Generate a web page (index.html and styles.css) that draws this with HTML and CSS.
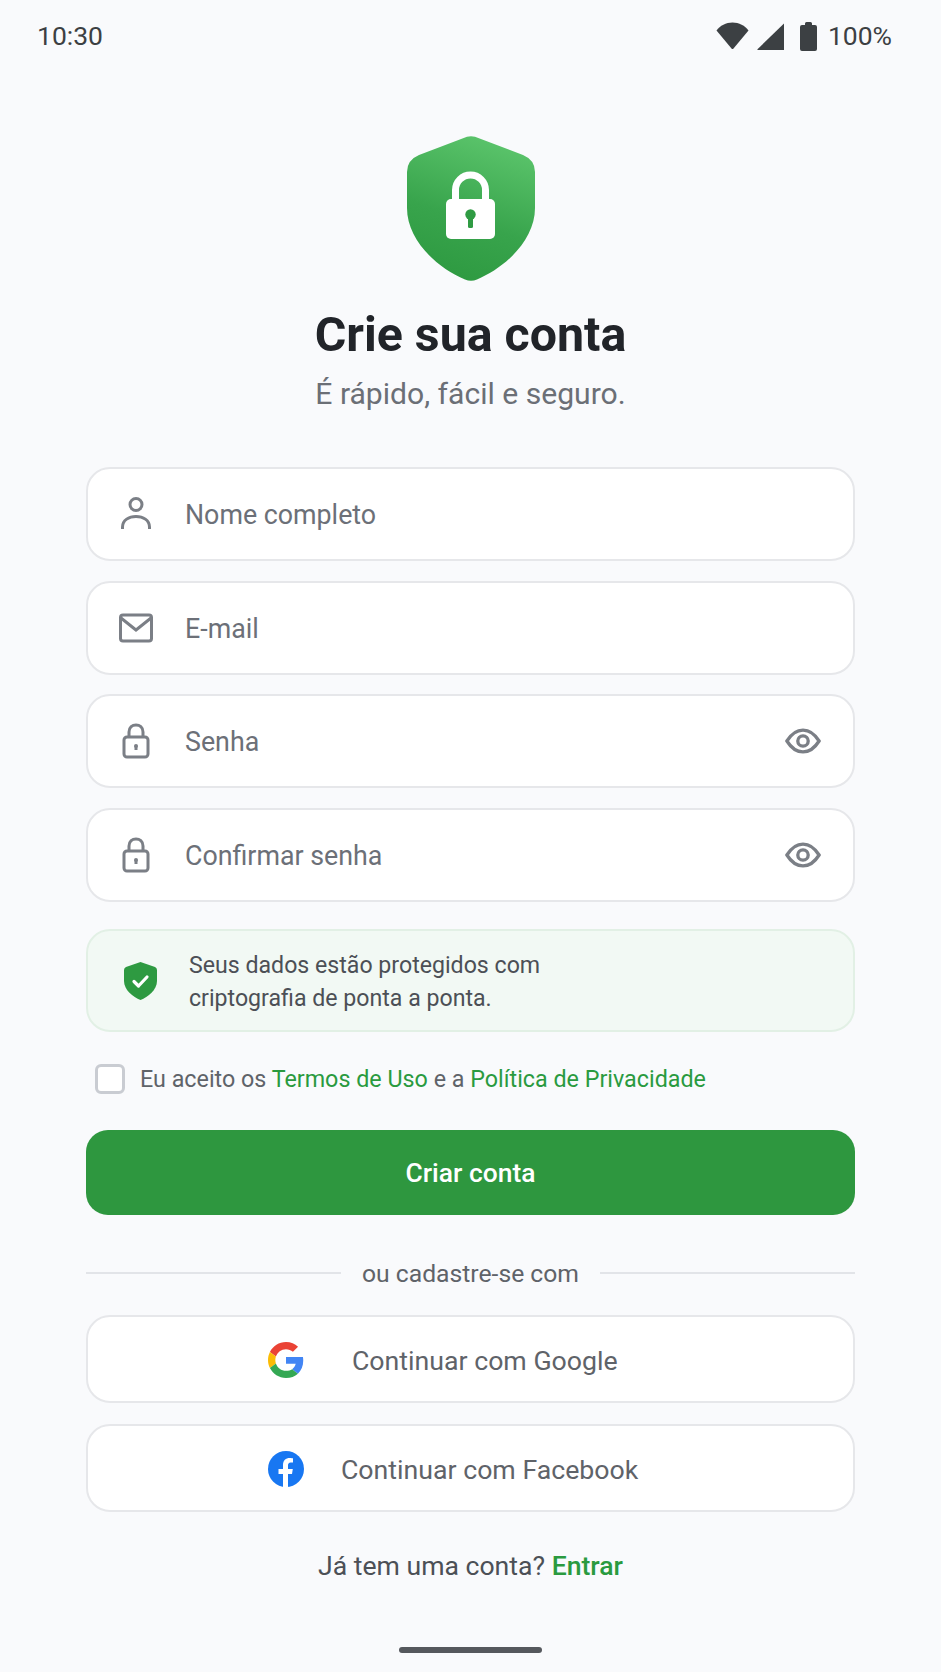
FILE: index.html
```html
<!DOCTYPE html>
<html lang="pt-BR">
<head>
    <meta charset="UTF-8">
    <title>Crie sua conta</title>
    <link rel="stylesheet" href="styles.css">
</head>
<body>

<!-- status bar -->
<div class="status">
    <span class="time">10:30</span>
    <div class="status-right">
        <svg class="ic-wifi" width="33" height="27" viewBox="0 0 33 27"><path d="M0.500 8.500C4 3.500 10 0.500 16.500 0.500S29 3.500 32.500 8.500L17.500 26.500Q16.500 27.500 15.500 26.500Z"/></svg>
        <svg class="ic-signal" width="27" height="27" viewBox="0 0 27 27"><path d="M27 0.500V27H1Q0 27 0.700 26Z"/></svg>
        <svg class="ic-battery" width="17" height="29" viewBox="0 0 17 29"><path d="M5 3V1.500Q5 0 6.500 0H10.500Q12 0 12 1.500V3H15Q17 3 17 5V27Q17 29 15 29H2Q0 29 0 27V5Q0 3 2 3Z"/></svg>
        <span class="pct">100%</span>
    </div>
</div>

<div class="page">
    <!-- logo -->
    <svg class="logo" width="128" height="145" viewBox="0 0 128 145">
        <defs>
            <linearGradient id="shieldFill" x1="0.700" y1="0" x2="0.400" y2="1">
                <stop offset="0" stop-color="#5cc56c"/>
                <stop offset="0.600" stop-color="#38a44c"/>
                <stop offset="1" stop-color="#2e9a41"/>
            </linearGradient>
        </defs>
        <path fill="url(#shieldFill)" d="M60 0.800Q64 -0.400 68 0.800L116 19Q128 24 128 36V72C128 104 98 132 70 143.500Q64 146 58 143.500C30 132 0 104 0 72V36Q0 24 12 19Z"/>
        <path fill="none" stroke="#fff" stroke-width="7" d="M48.500 66V54A15 15 0 0 1 78.500 54V66"/>
        <rect x="39" y="63" width="49" height="40" rx="5" fill="#fff"/>
        <circle cx="63.500" cy="78.500" r="5.200" fill="#2f9b43"/>
        <rect x="61" y="79" width="5" height="13" rx="1.500" fill="#2f9b43"/>
    </svg>

    <h1 class="title">Crie sua conta</h1>
    <p class="subtitle">É rápido, fácil e seguro.</p>

    <div class="fields">
        <div class="field">
            <svg class="field-icon" width="36" height="36" viewBox="0 0 36 36"><circle cx="18" cy="8.500" r="6"/><path d="M4.500 33V31C4.500 24 11 20.500 18 20.500S31.500 24 31.500 31V33"/></svg>
            <span class="placeholder">Nome completo</span>
        </div>
        <div class="field">
            <svg class="field-icon" width="36" height="36" viewBox="0 0 36 36"><rect x="2.500" y="5" width="31" height="26" rx="2.500"/><path d="M3 8L18 20L33 8"/></svg>
            <span class="placeholder">E-mail</span>
        </div>
        <div class="field">
            <svg class="field-icon" width="36" height="36" viewBox="0 0 36 36"><rect x="6" y="14" width="24" height="20" rx="3"/><path d="M11 14V9C11 -0.500 25 -0.500 25 9V14"/><circle class="dot" cx="18" cy="23" r="2"/><path class="stem" d="M18 23V27"/></svg>
            <span class="placeholder">Senha</span>
            <svg class="eye" width="36" height="28" viewBox="0 0 38 28"><path d="M2 14C7 6 13 2.500 19 2.500S31 6 36 14C31 22 25 25.500 19 25.500S7 22 2 14Z"/><circle cx="19" cy="14" r="5.500"/></svg>
        </div>
        <div class="field">
            <svg class="field-icon" width="36" height="36" viewBox="0 0 36 36"><rect x="6" y="14" width="24" height="20" rx="3"/><path d="M11 14V9C11 -0.500 25 -0.500 25 9V14"/><circle class="dot" cx="18" cy="23" r="2"/><path class="stem" d="M18 23V27"/></svg>
            <span class="placeholder">Confirmar senha</span>
            <svg class="eye" width="36" height="28" viewBox="0 0 38 28"><path d="M2 14C7 6 13 2.500 19 2.500S31 6 36 14C31 22 25 25.500 19 25.500S7 22 2 14Z"/><circle cx="19" cy="14" r="5.500"/></svg>
        </div>
    </div>

    <div class="secure">
        <svg width="33" height="38" viewBox="0 0 33 38"><path fill="#2e9a41" d="M16.500 0L31 5Q33 5.800 33 8V19C33 28 24 35 16.500 38C9 35 0 28 0 19V8Q0 5.800 2 5Z"/><path fill="none" stroke="#fff" stroke-width="3.200" stroke-linecap="round" stroke-linejoin="round" d="M10 19.500L14.500 24L23 15"/></svg>
        <p>Seus dados estão protegidos com<br>criptografia de ponta a ponta.</p>
    </div>

    <div class="terms">
        <span class="check"></span>
        <span>Eu aceito os <a href="#">Termos de Uso</a> e a <a href="#">Política de Privacidade</a></span>
    </div>

    <button class="submit">Criar conta</button>

    <div class="divider"><span>ou cadastre-se com</span></div>

    <div class="social social-google">
        <svg width="36" height="36" viewBox="0 0 48 48">
            <path fill="#ea4335" d="M24 9.500c3.540 0 6.710 1.220 9.210 3.600l6.850-6.850C35.900 2.380 30.470 0 24 0 14.620 0 6.510 5.380 2.560 13.220l7.980 6.190C12.430 13.720 17.740 9.500 24 9.500z"/>
            <path fill="#4285f4" d="M46.980 24.550c0-1.570-.15-3.090-.38-4.550H24v9.020h12.940c-.58 2.960-2.260 5.480-4.780 7.180l7.730 6c4.510-4.180 7.090-10.360 7.090-17.650z"/>
            <path fill="#fbbc05" d="M10.530 28.590c-.48-1.450-.76-2.990-.76-4.590s.27-3.140.76-4.590l-7.980-6.190C.92 16.460 0 20.120 0 24c0 3.880.92 7.540 2.560 10.780l7.970-6.190z"/>
            <path fill="#34a853" d="M24 48c6.480 0 11.930-2.130 15.890-5.810l-7.730-6c-2.150 1.450-4.920 2.300-8.160 2.300-6.260 0-11.570-4.220-13.470-9.910l-7.980 6.190C6.510 42.620 14.620 48 24 48z"/>
        </svg>
        <span>Continuar com Google</span>
    </div>
    <div class="social social-facebook">
        <svg width="36" height="36" viewBox="0 0 36 36">
            <circle cx="18" cy="18" r="18" fill="#1877f2"/>
            <path fill="#fff" d="M15 36V23H10.500V18H15V14C15 9.500 17.700 7 21.800 7C23.400 7 25 7.300 25 7.300V11.600H22.800C20.600 11.600 20 13 20 14.400V18H24.800L24 23H20V36Z"/>
        </svg>
        <span>Continuar com Facebook</span>
    </div>

    <p class="signin">Já tem uma conta? <a href="#">Entrar</a></p>

    <div class="home-bar"></div>
</div>

</body>
</html>
```

FILE: styles.css
```css
* {
    box-sizing: border-box;
}
body {
    margin: 0;
    background-color: #f9fafc;
    color: #5f6369;
    font-family: Roboto, "Liberation Sans", sans-serif;
}
a {
    color: #2a9a3f;
    text-decoration: none;
}

/* status bar */
.status {
    display: flex;
    justify-content: space-between;
    align-items: center;
    height: 72px;
    padding: 0 49px 0 37px;
    color: #3c4043;
    font-size: 26.5px;
}
.time,
.pct {
    margin-bottom: 2px;
}
.status-right {
    display: flex;
    align-items: center;
}
.status-right svg {
    fill: #3c4043;
}
.ic-wifi {
    margin-top: -1px;
    margin-right: 8px;
}
.ic-signal {
    margin-right: 16px;
}
.ic-battery {
    margin-right: 11px;
}

.page {
    display: flex;
    flex-direction: column;
    padding: 0 86px 19px;
}
.logo {
    align-self: center;
    margin-top: 64px;
}
.title {
    margin: 27px 0 0;
    color: #212429;
    font-size: 48.3px;
    font-weight: 700;
    line-height: 54px;
    text-align: center;
}
.subtitle {
    margin: 14px 0 0;
    color: #6b6f76;
    font-size: 30.100px;
    line-height: 36px;
    text-align: center;
}

/* input rows */
.fields {
    display: flex;
    flex-direction: column;
    gap: 19.7px;
    margin-top: 55px;
}
.field {
    display: flex;
    align-items: center;
    height: 94px;
    padding: 0 32px 0 30px;
    border: 2px solid #e6e7ea;
    border-radius: 24px;
    background-color: #fff;
}
.field-icon {
    flex: none;
    fill: none;
    stroke: #7b7f86;
    stroke-width: 3;
}
.field-icon .dot {
    fill: #7b7f86;
    stroke: none;
}
.placeholder {
    flex: 1;
    margin-top: 2px;
    margin-left: 31px;
    color: #6c7078;
    font-size: 26.8px;
}
.eye {
    fill: none;
    stroke: #7b7f86;
    stroke-width: 3.500;
}

.secure {
    display: flex;
    align-items: center;
    gap: 32px;
    height: 103px;
    margin-top: 27px;
    padding: 3px 36px 0;
    border: 2px solid #e2f0e5;
    border-radius: 24px;
    background-color: #f2f9f4;
}
.secure svg {
    flex: none;
    margin-top: -3px;
}
.secure p {
    margin: 0;
    color: #4c5056;
    font-size: 23.150px;
    line-height: 33px;
}

.terms {
    display: flex;
    align-items: center;
    gap: 15px;
    height: 30px;
    margin-top: 32px;
    padding-left: 9px;
    font-size: 23.300px;
}
.check {
    flex: none;
    width: 30px;
    height: 30px;
    border: 3px solid #c9ccd2;
    border-radius: 6px;
    background-color: #fff;
}

.submit {
    height: 85px;
    margin-top: 36px;
    border: 0;
    border-radius: 22px;
    background-color: #2e973f;
    color: #fff;
    font-family: inherit;
    font-size: 26.400px;
    font-weight: 500;
}

/* "ou cadastre-se com" separator */
.divider {
    display: flex;
    align-items: center;
    gap: 21px;
    height: 30px;
    margin-top: 43px;
    font-size: 24.700px;
}
.divider::before,
.divider::after {
    content: "";
    flex: 1;
    height: 2px;
    background-color: #e2e4e8;
}

.social {
    display: flex;
    align-items: center;
    height: 88px;
    padding-left: 180px;
    border: 2px solid #e6e7ea;
    border-radius: 24px;
    background-color: #fff;
    font-size: 26.7px;
}
.social svg {
    flex: none;
    margin-top: 2px;
}
.social span {
    margin-top: 4px;
}
.social-google {
    gap: 48px;
    margin-top: 27px;
}
.social-facebook {
    gap: 37px;
    margin-top: 21px;
}

.signin {
    margin: 37px 0 0;
    color: #4c5056;
    font-size: 26.600px;
    line-height: 34px;
    text-align: center;
}
.signin a {
    font-weight: 500;
}
.home-bar {
    align-self: center;
    width: 143px;
    height: 6px;
    margin-top: 64px;
    border-radius: 3px;
    background-color: #55585d;
}
```
